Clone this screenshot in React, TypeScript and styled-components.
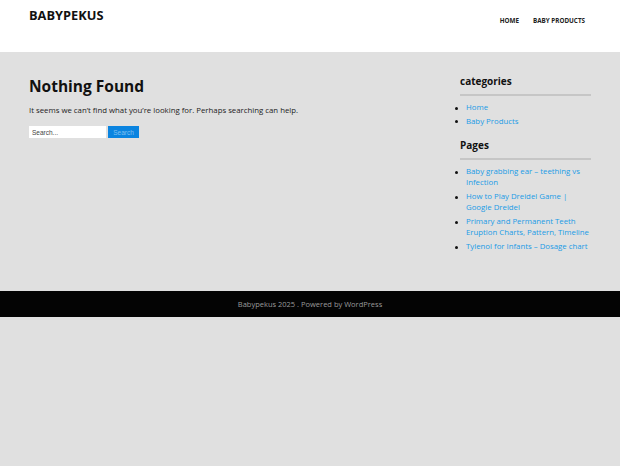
import { FunctionComponent } from "react";
import styled, { createGlobalStyle } from "styled-components";

const GlobalStyle = createGlobalStyle`
  html, body {
    margin: 0;
    padding: 0;
    background-color: #e0e0e0;
    font-family: "Open Sans", "DejaVu Sans", sans-serif;
  }
`;

const Page = styled.div`
  width: 100%;
  min-height: 466px;
  display: flex;
  flex-direction: column;
  background-color: #e0e0e0;
`;

const Header = styled.header`
  height: 52px;
  background-color: #fff;
  display: flex;
  justify-content: space-between;
  align-items: flex-start;
  padding: 0 35px 0 29px;
  box-sizing: border-box;
`;

const Logo = styled.div`
  margin-top: 6px;
  font-size: 12.8px;
  font-weight: 700;
  color: #111;
`;

const Nav = styled.nav`
  margin-top: 16px;
  display: flex;
  gap: 14px;
`;

const NavLink = styled.a`
  font-size: 6.3px;
  font-weight: 700;
  color: #222;
  text-transform: uppercase;
  text-decoration: none;
`;

const Body = styled.div`
  display: flex;
  justify-content: space-between;
  padding: 22px 29px 0 29px;
  height: 239px;
  box-sizing: border-box;
`;

const Main = styled.main`
  display: flex;
  flex-direction: column;
`;

const Title = styled.h1`
  margin: 0;
  font-size: 15.5px;
  font-weight: 700;
  color: #111;
  line-height: 24px;
`;

const Paragraph = styled.p`
  margin: 6px 0 0;
  font-size: 7.8px;
  color: #222;
  line-height: 12px;
`;

const SearchForm = styled.form`
  display: flex;
  gap: 2px;
  margin-top: 10px;
`;

const SearchInput = styled.input`
  width: 77px;
  height: 12px;
  box-sizing: border-box;
  border: none;
  padding: 0 3px;
  font-size: 6.5px;
  font-family: "Liberation Sans", sans-serif;
  color: #333;
  background: #fff;
  &::placeholder {
    color: #444;
  }
`;

const SearchButton = styled.button`
  width: 31px;
  height: 12px;
  border: none;
  padding: 0;
  background-color: #0a84e0;
  color: #7fc0f0;
  font-size: 6.5px;
  font-family: "Liberation Sans", sans-serif;
`;

const Sidebar = styled.aside`
  width: 131px;
  padding-top: 1px;
`;

const Widget = styled.section`
  margin-bottom: 12px;
`;

const WidgetTitle = styled.h2`
  margin: 0;
  font-size: 10px;
  font-weight: 700;
  color: #111;
  line-height: 13px;
  padding-bottom: 6px;
  border-bottom: 2px solid #c6c6c6;
`;

const List = styled.ul`
  margin: 6px 0 0;
  padding: 0 0 0 6px;
  list-style: none;
`;

const Item = styled.li`
  display: flex;
  font-size: 7.8px;
  line-height: 11.2px;
  margin-bottom: 2.6px;
  &::before {
    content: "";
    flex-shrink: 0;
    width: 3px;
    height: 3px;
    border-radius: 50%;
    background-color: #111;
    margin: 4.5px 8px 0 -11px;
  }
`;

const Link = styled.a`
  color: #1a9be6;
  text-decoration: none;
`;

const Footer = styled.footer`
  height: 26px;
  background-color: #040404;
  display: flex;
  align-items: center;
  justify-content: center;
  font-size: 7.5px;
  color: #9a9a9a;
`;

const categories = ["Home", "Baby Products"];
const pages = [
  "Baby grabbing ear – teething vs Infection",
  "How to Play Dreidel Game | Google Dreidel",
  "Primary and Permanent Teeth Eruption Charts, Pattern, Timeline",
  "Tylenol for Infants – Dosage chart",
];

const App: FunctionComponent = () => {
  return (
    <Page>
      <GlobalStyle />
      <Header>
        <Logo>BABYPEKUS</Logo>
        <Nav>
          <NavLink href="#">Home</NavLink>
          <NavLink href="#">Baby Products</NavLink>
        </Nav>
      </Header>
      <Body>
        <Main>
          <Title>Nothing Found</Title>
          <Paragraph>
            It seems we can’t find what you’re looking for. Perhaps searching can help.
          </Paragraph>
          <SearchForm onSubmit={(e) => e.preventDefault()}>
            <SearchInput placeholder="Search..." />
            <SearchButton type="submit">Search</SearchButton>
          </SearchForm>
        </Main>
        <Sidebar>
          <Widget>
            <WidgetTitle>categories</WidgetTitle>
            <List>
              {categories.map((c) => (
                <Item key={c}>
                  <Link href="#">{c}</Link>
                </Item>
              ))}
            </List>
          </Widget>
          <Widget>
            <WidgetTitle>Pages</WidgetTitle>
            <List>
              {pages.map((p) => (
                <Item key={p}>
                  <Link href="#">{p}</Link>
                </Item>
              ))}
            </List>
          </Widget>
        </Sidebar>
      </Body>
      <Footer>Babypekus 2025 . Powered by WordPress</Footer>
    </Page>
  );
};

export default App;
